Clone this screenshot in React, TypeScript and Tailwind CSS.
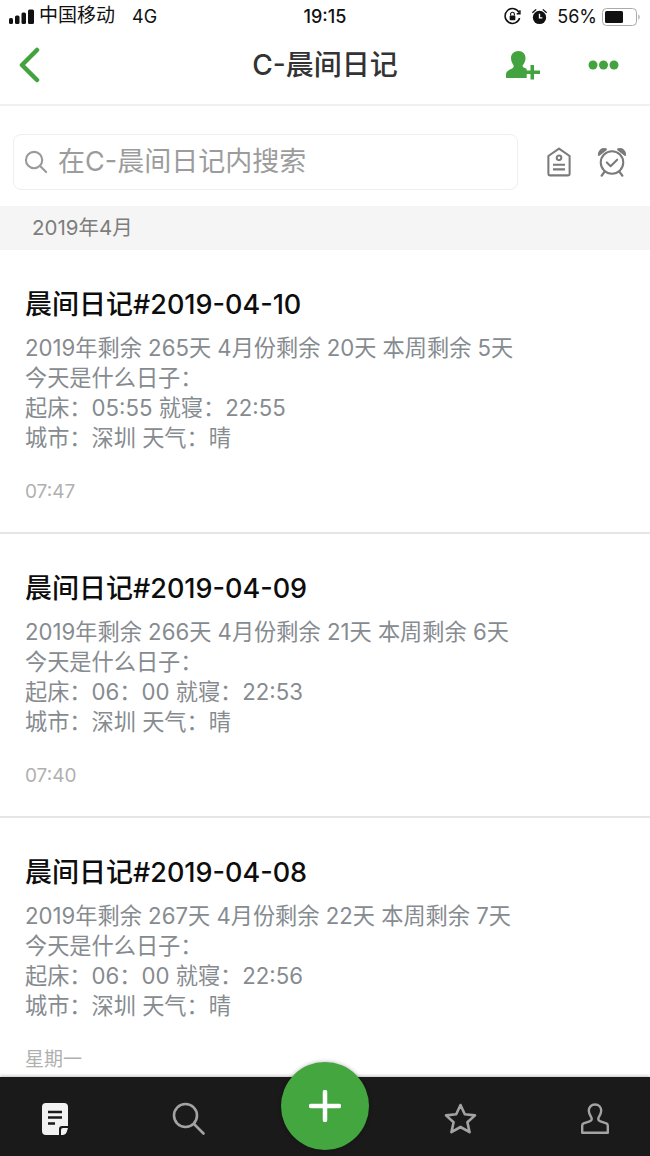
import React from "react";

const font = { fontFamily: 'Inter,"Noto Sans CJK SC",sans-serif' };

function Signal() {
  return (
    <svg width="26" height="16" viewBox="0 0 26 16" fill="#111">
      <rect x="0" y="9" width="4" height="6" rx="1.500" />
      <rect x="6" y="6.500" width="4.500" height="8.500" rx="1.500" />
      <rect x="12.500" y="3.500" width="4.500" height="11.500" rx="1.500" />
      <rect x="19" y="0.500" width="6" height="14.500" rx="1.500" />
    </svg>
  );
}

function Entry({ title, l1, l2, time }: { title: string; l1: string; l2: string; time: string }) {
  return (
    <div className="h-[284px] shrink-0 border-b-2 border-[#e6e6e6] pl-[25px] pt-[37px]">
      <div className="h-[36px] text-[27px] font-medium leading-[36px] text-[#0d0d0d]">{title}</div>
      <div className="mt-[10px] text-[22.200px] leading-[30px] text-[#868b90]">
        <div>{l1}</div>
        <div>今天是什么日子：</div>
        <div>{l2}</div>
        <div>城市：深圳 天气：晴</div>
      </div>
      <div className="mt-[26px] text-[19px] leading-[26px] text-[#b0b0b0]">{time}</div>
    </div>
  );
}

export default function App() {
  return (
    <div style={font} className="relative flex h-[1156px] w-[650px] flex-col overflow-hidden bg-white">
      {/* status bar */}
      <div className="flex h-[32px] shrink-0 items-center justify-between pl-[9px] pr-[9px] pt-[1px] text-[18px] text-[#111]">
        <div className="flex w-[200px] items-center">
          <Signal />
          <span className="ml-[4px] text-[19px]">中国移动</span>
          <span className="ml-[17px]">4G</span>
        </div>
        <div className="text-[18px] font-medium">19:15</div>
        <div className="flex w-[200px] items-center justify-end">
          <svg width="19" height="19" viewBox="0 0 20 20" fill="none" stroke="#111" strokeWidth="1.600">
            <path d="M17.500 11.500A7.800 7.800 0 1 1 17 6" />
            <path d="M17.800 3.500V7h-3.400" />
            <rect x="7" y="9" width="6" height="5" rx="1" fill="#111" stroke="none" />
            <path d="M8 9V7.500a2 2 0 0 1 4 0V9" strokeWidth="1.200" />
          </svg>
          <svg className="ml-[8px]" width="19" height="19" viewBox="0 0 20 20" fill="#111">
            <circle cx="10" cy="11" r="7" />
            <path d="M2 5.500 6 2l1 1-4 3.500zM18 5.500 14 2l-1 1 4 3.500z" />
            <path d="M10 7v4.500h3" stroke="#fff" strokeWidth="1.400" fill="none" />
          </svg>
          <span className="ml-[8px]">56%</span>
          <svg className="ml-[5px]" width="39" height="18" viewBox="0 0 39 18" fill="none">
            <rect x="0.500" y="0.500" width="34" height="17" rx="4" stroke="#aaa" />
            <rect x="3" y="3" width="18" height="12" rx="1.500" fill="#111" />
            <path d="M36.500 6.500c1.300.5 1.300 4.500 0 5z" fill="#888" />
          </svg>
        </div>
      </div>

      {/* nav bar */}
      <div className="grid h-[74px] shrink-0 grid-cols-[1fr_auto_1fr] items-center border-b-2 border-[#f0f0f0] pb-[6px]">
        <svg className="ml-[19px]" width="22" height="36" viewBox="0 0 22 36" fill="none" stroke="#43a33f" strokeWidth="4.500" strokeLinecap="round" strokeLinejoin="round">
          <path d="M18 3 3 18l15 15" />
        </svg>
        <div className="text-[28px] font-medium text-[#333]">C-晨间日记</div>
        <div className="mr-[31px] flex items-center justify-end">
          <svg width="34" height="30" viewBox="0 0 34 30" fill="#43a33f">
            <path d="M12.500 1c4.300 0 7 3 7 7 0 3-1.200 5.500-2.700 7.300-.6 1.300.2 2.200 2 2.800l1.900.7V28H0v-3.500c0-2.700 2-4.200 5-5.400 2.200-.9 3.200-2 2.500-3.800C6.300 13.500 5 11 5 8c0-4 3-7 7.500-7z" />
            <path d="M24.500 15h3.500v5.500h6v3.500h-6v5.500h-3.500V24h-5v-3.500h5z" />
          </svg>
          <svg className="ml-[48px]" width="31" height="10" viewBox="0 0 31 10" fill="#43a33f">
            <circle cx="5" cy="5" r="4.500" />
            <circle cx="15.500" cy="5" r="4.500" />
            <circle cx="26" cy="5" r="4.500" />
          </svg>
        </div>
      </div>

      {/* search row */}
      <div className="flex h-[100px] shrink-0 items-center pl-[13px] pt-[12px]">
        <div className="flex h-[56px] w-[505px] items-center rounded-[8px] border border-[#eeeeee] pl-[10px]">
          <svg width="24" height="24" viewBox="0 0 25 25" fill="none" stroke="#9a9a9a" strokeWidth="2.200" strokeLinecap="round">
            <circle cx="10.500" cy="10.500" r="8.500" />
            <path d="m17 17 6 6" />
          </svg>
          <span className="ml-[10px] text-[27px] text-[#9c9c9c]">在C-晨间日记内搜索</span>
        </div>
        <svg className="ml-[29px]" width="24" height="30" viewBox="0 0 26 32" fill="none" stroke="#7a7a7a" strokeWidth="2.200" strokeLinejoin="round">
          <path d="M13 1.500 24.500 9.500V29a1.500 1.500 0 0 1-1.500 1.500H3A1.500 1.500 0 0 1 1.500 29V9.500z" />
          <circle cx="13" cy="11.500" r="2.500" />
          <path d="M6.500 19h13M6.500 24h13" />
        </svg>
        <svg className="ml-[26px]" width="30" height="30" viewBox="0 0 32 32" fill="none" stroke="#7a7a7a" strokeWidth="2.200" strokeLinecap="round" strokeLinejoin="round">
          <circle cx="16" cy="16.500" r="12" />
          <path d="M10.500 16.500l4 4 7-7" />
          <path d="M2 8.500C2 4 5 1.500 9.500 2.500zM30 8.500C30 4 27 1.500 22.500 2.500z" fill="#7a7a7a" />
          <path d="m8 26.500-3 4M24 26.500l3 4" strokeWidth="2.500" />
        </svg>
      </div>

      {/* month band */}
      <div className="flex h-[44px] shrink-0 items-center bg-[#f5f5f5] pl-[32px] text-[20.500px] text-[#7d7d7d]">2019年4月</div>

      {/* list */}
      <div className="flex min-h-0 flex-1 flex-col overflow-hidden">
        <Entry title="晨间日记#2019-04-10" l1="2019年剩余 265天 4月份剩余 20天 本周剩余 5天" l2="起床：05:55 就寝：22:55" time="07:47" />
        <Entry title="晨间日记#2019-04-09" l1="2019年剩余 266天 4月份剩余 21天 本周剩余 6天" l2="起床：06：00 就寝：22:53" time="07:40" />
        <Entry title="晨间日记#2019-04-08" l1="2019年剩余 267天 4月份剩余 22天 本周剩余 7天" l2="起床：06：00 就寝：22:56" time="星期一" />
      </div>

      {/* tab bar */}
      <div className="flex h-[79px] shrink-0 items-center bg-[#1a1a1a] shadow-[0_-1px_3px_rgba(0,0,0,0.25)]">
        <div className="flex w-[110px] justify-center pt-[4px]">
          <svg width="26" height="32" viewBox="0 0 26 32">
            <path d="M4 0h18a4 4 0 0 1 4 4v19h-6a3 3 0 0 0-3 3v6H4a4 4 0 0 1-4-4V4a4 4 0 0 1 4-4z" fill="#f2f2f2" />
            <path d="M6 9h14M6 14.500h14M6 20.500h7" stroke="#1a1a1a" strokeWidth="2.400" fill="none" />
            <path d="M19 32v-5a2 2 0 0 1 2-2h5l-1 3a5 5 0 0 1-4 4z" fill="#f2f2f2" />
          </svg>
        </div>
        <div className="w-[46px]" />
        <div className="flex w-[64px] justify-center pt-[4px]">
          <svg width="33" height="33" viewBox="0 0 33 33" fill="none" stroke="#a3a3a3" strokeWidth="2.600" strokeLinecap="round">
            <circle cx="13.500" cy="13.500" r="11.500" />
            <path d="m22 22 9.500 9.500" />
          </svg>
        </div>
        <div className="flex-1" />
        <div className="pt-[4px]">
          <svg width="33" height="32" viewBox="0 0 33 32" fill="none" stroke="#a3a3a3" strokeWidth="2.600" strokeLinejoin="round">
            <path d="m16.500 2 4.300 9.300 10.200 1.100-7.600 6.800 2.200 10-9.100-5.200-9.100 5.200 2.200-10L2 12.400l10.200-1.100z" />
          </svg>
        </div>
        <div className="ml-[104px] mr-[41px] pt-[4px]">
          <svg width="28" height="32" viewBox="0 0 28 32" fill="none" stroke="#a3a3a3" strokeWidth="2.400" strokeLinejoin="round">
            <path d="M14 1.500c3.800 0 6.200 2.800 6.200 6.300 0 2.700-1.400 4.700-2.500 6.500-1 1.800-.3 3.400 1.700 4l6 2c1.100.5 1.400 1.300 1.400 2.500v7H1.200v-7c0-1.200.3-2 1.400-2.500l6-2c2-.6 2.700-2.200 1.700-4-1.100-1.800-2.500-3.800-2.500-6.500 0-3.500 2.400-6.300 6.200-6.300z" />
          </svg>
        </div>
      </div>

      {/* floating add */}
      <div className="absolute left-[281px] top-[1062px] flex h-[88px] w-[88px] items-center justify-center rounded-full bg-[#43a63f] shadow-[0_0_4px_rgba(0,0,0,0.3)]">
        <svg width="32" height="32" viewBox="0 0 32 32" stroke="#fff" strokeWidth="4.500" strokeLinecap="round">
          <path d="M16 2v28M2 16h28" />
        </svg>
      </div>
    </div>
  );
}
